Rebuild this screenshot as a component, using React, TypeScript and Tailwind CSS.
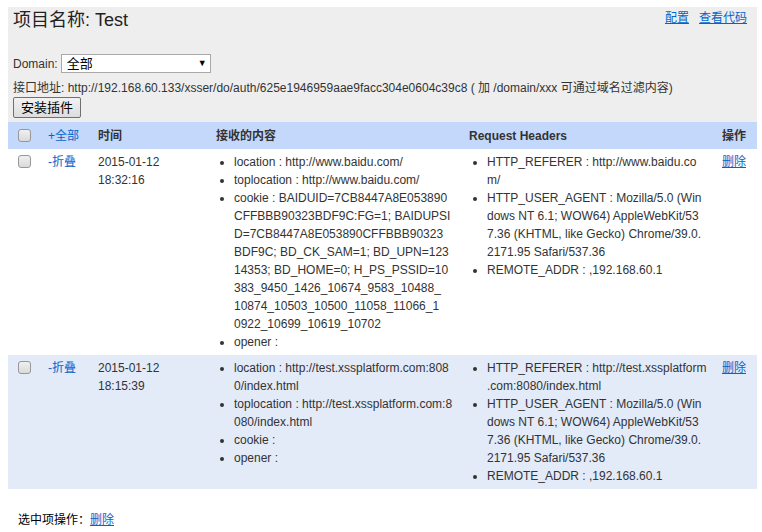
import React from "react";

const FONT = { fontFamily: '"Liberation Sans", Arial, "Noto Sans CJK SC", sans-serif' };

function Box() {
  return (
    <span className="block w-[13px] h-[13px] rounded-[3px] border border-[#979797] bg-gradient-to-b from-[#f0f0f0] to-[#dadada]" />
  );
}

type RowData = {
  time: [string, string];
  content: string[][];
  headers: string[][];
};

const UA = [
  "HTTP_USER_AGENT : Mozilla/5.0 (Win",
  "dows NT 6.1; WOW64) AppleWebKit/53",
  "7.36 (KHTML, like Gecko) Chrome/39.0.",
  "2171.95 Safari/537.36",
];

const rows: RowData[] = [
  {
    time: ["2015-01-12", "18:32:16"],
    content: [
      ["location : http://www.baidu.com/"],
      ["toplocation : http://www.baidu.com/"],
      [
        "cookie : BAIDUID=7CB8447A8E053890",
        "CFFBBB90323BDF9C:FG=1; BAIDUPSI",
        "D=7CB8447A8E053890CFFBBB90323",
        "BDF9C; BD_CK_SAM=1; BD_UPN=123",
        "14353; BD_HOME=0; H_PS_PSSID=10",
        "383_9450_1426_10674_9583_10488_",
        "10874_10503_10500_11058_11066_1",
        "0922_10699_10619_10702",
      ],
      ["opener :"],
    ],
    headers: [
      ["HTTP_REFERER : http://www.baidu.co", "m/"],
      UA,
      ["REMOTE_ADDR : ,192.168.60.1"],
    ],
  },
  {
    time: ["2015-01-12", "18:15:39"],
    content: [
      ["location : http://test.xssplatform.com:808", "0/index.html"],
      ["toplocation : http://test.xssplatform.com:8", "080/index.html"],
      ["cookie :"],
      ["opener :"],
    ],
    headers: [
      ["HTTP_REFERER : http://test.xssplatform", ".com:8080/index.html"],
      UA,
      ["REMOTE_ADDR : ,192.168.60.1"],
    ],
  },
];

function List({ items }: { items: string[][] }) {
  return (
    <ul className="list-disc pl-[18px]">
      {items.map((lines, i) => (
        <li key={i} className="leading-[18px]">
          {lines.map((l, j) => (
            <div key={j} className="whitespace-nowrap">
              {l}
            </div>
          ))}
        </li>
      ))}
    </ul>
  );
}

export default function App() {
  return (
    <div className="w-[762px] h-[532px] bg-white text-[12px] text-[#333]" style={FONT}>
      <div className="pl-[8px] pr-[5px] pt-[7px]">
        <div className="bg-[#eeeeee] pl-[5px] pr-[10px] pt-[1px] pb-[4px]">
          <div className="flex justify-between items-start">
            <div className="text-[18px] leading-[24px] text-[#222]">项目名称: Test</div>
            <div className="flex gap-[10px] mt-[1px] leading-[18px] text-[12px]">
              <a className="text-[#0066cc] underline">配置</a>
              <a className="text-[#0066cc] underline">查看代码</a>
            </div>
          </div>
          <div className="flex items-center h-[19px] mt-[22px]">
            <span className="mr-[3px]">Domain:</span>
            <div className="w-[150px] h-[19px] border border-[#a9a9a9] bg-white flex items-center justify-between pl-[5px] pr-[3px]">
              <span className="text-[13px] text-black">全部</span>
              <span className="text-[9px] text-black">▼</span>
            </div>
          </div>
          <div className="mt-[6px] leading-[18px]">
            接口地址: http://192.168.60.133/xsser/do/auth/625e1946959aae9facc304e0604c39c8 ( 加 /domain/xxx 可通过域名过滤内容)
          </div>
          <button className="w-[68px] h-[21px] border border-[#707070] rounded-[2px] bg-gradient-to-b from-[#f2f2f2] to-[#dddddd] text-[13px] text-black leading-none">
            安装插件
          </button>
        </div>

        <div className="grid grid-cols-[32px_50px_118px_253px_253px_43px] h-[27px] items-center bg-[#c4d8fc] font-bold text-[#333]">
          <div className="flex justify-center">
            <Box />
          </div>
          <div className="px-[8px] font-normal text-[#0066cc]">+全部</div>
          <div className="px-[8px]">时间</div>
          <div className="px-[8px]">接收的内容</div>
          <div className="px-[8px]">Request Headers</div>
          <div className="px-[8px]">操作</div>
        </div>

        {rows.map((r, i) => (
          <div
            key={i}
            className={
              "grid grid-cols-[32px_50px_118px_253px_253px_43px] items-start pt-[4px] pb-[4px] " +
              (i % 2 === 1 ? "bg-[#e3eaf8]" : "bg-white")
            }
          >
            <div className="flex justify-center pt-[2px]">
              <Box />
            </div>
            <div className="px-[8px] leading-[18px] text-[#0066cc]">-折叠</div>
            <div className="px-[8px] leading-[18px]">
              <div>{r.time[0]}</div>
              <div>{r.time[1]}</div>
            </div>
            <div className="px-[8px]">
              <List items={r.content} />
            </div>
            <div className="px-[8px]">
              <List items={r.headers} />
            </div>
            <div className="px-[8px] leading-[18px]">
              <a className="text-[#0066cc] underline">删除</a>
            </div>
          </div>
        ))}

        <div className="mt-[22px] pl-[10px] leading-[18px] text-black">
          选中项操作：<a className="text-[#0066cc] underline">删除</a>
        </div>
      </div>
    </div>
  );
}
